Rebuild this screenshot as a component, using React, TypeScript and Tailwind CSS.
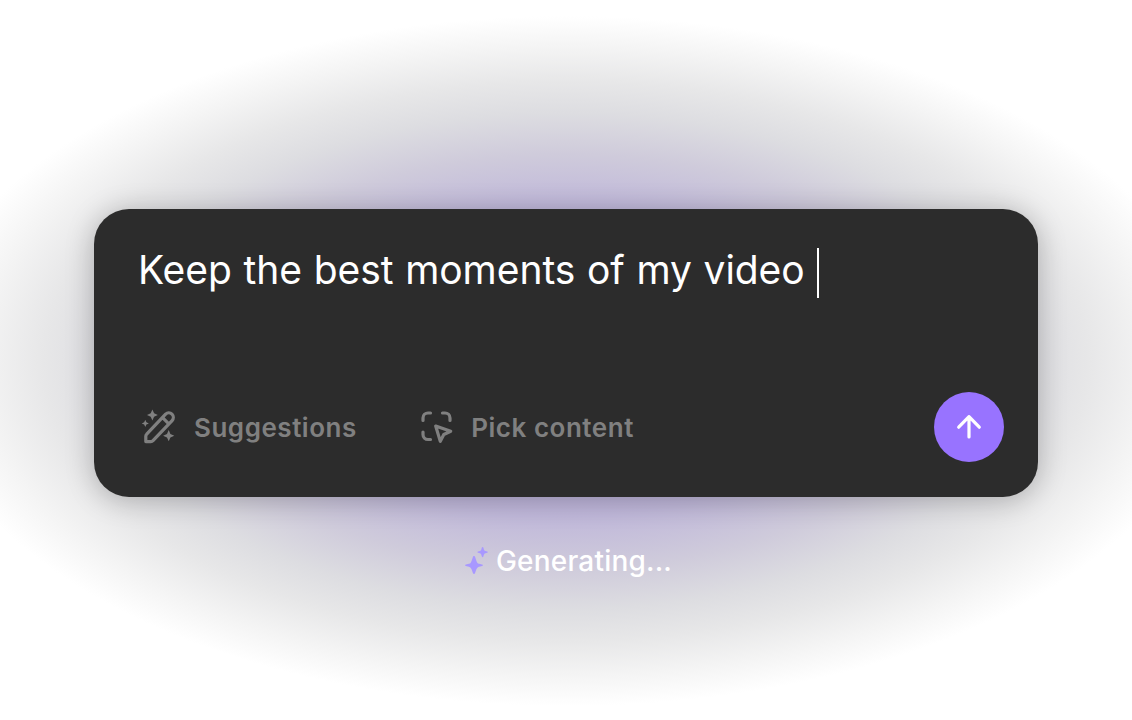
import React, { useState } from 'react';

type IconProps = { className?: string };

const SuggestionsIcon: React.FC<IconProps> = ({ className }) => (
  <svg className={className} viewBox="0 0 38 38" fill="none" aria-hidden="true">
    <path
      d="M5.8 33.6v-5.3c0-.8.3-1.6.9-2.1L25.6 6.1a4.6 4.6 0 0 1 6.5 6.5L13 32.7c-.6.6-1.3.9-2.1.9Z M22.6 9.6l6.2 6.2"
      stroke="currentColor"
      strokeWidth="3.2"
      strokeLinejoin="round"
    />
    <path
      d="M12.4 1.6l1.7 3.7 3.7 1.7-3.7 1.7-1.7 3.7-1.7-3.7-3.7-1.7 3.7-1.7ZM5.3 11.8l1.1 2.5 2.5 1.1-2.5 1.1-1.1 2.5-1.1-2.5-2.5-1.1 2.5-1.1ZM28.7 22.1l1.7 3.9 3.9 1.7-3.9 1.7-1.7 3.9-1.7-3.9-3.9-1.7 3.9-1.7Z"
      fill="currentColor"
    />
  </svg>
);

const PickIcon: React.FC<IconProps> = ({ className }) => (
  <svg className={className} viewBox="0 0 38 38" fill="none" aria-hidden="true">
    <g stroke="currentColor" strokeWidth="3.2" strokeLinecap="round" strokeLinejoin="round">
      <path d="M4 12.5V10a5 5 0 0 1 5-5h2.5M23.5 5h2.5a5 5 0 0 1 5 5v2.500M4 24v2.500a5 5 0 0 0 5 5h2.500" />
      <path d="M16.7 18l15 5.2-6.9 3.3-3.5 6.9Z" />
    </g>
  </svg>
);

const ArrowUpIcon: React.FC<IconProps> = ({ className }) => (
  <svg className={className} viewBox="0 0 30 30" fill="none" aria-hidden="true">
    <path
      d="M15 25V4.7M4.7 15.2L15 4.7l10.3 10.5"
      stroke="currentColor"
      strokeWidth="3.2"
      strokeLinecap="round"
      strokeLinejoin="round"
    />
  </svg>
);

const SparklesIcon: React.FC<IconProps> = ({ className }) => (
  <svg className={className} viewBox="0 0 24 28" fill="currentColor" aria-hidden="true">
    <path d="M9 9c.7 0 .9.5 1.1 1.1 1.2 3.6 1.6 5.1 2.3 5.8.7.6 1.9.8 4.6 1.5.6.2.9.4.9.8s-.3.7-.9.9c-2.7.7-3.9 1-4.6 1.6-.7.7-1.1 1.9-2.3 5.2-.2.6-.4.9-1.1.9s-.9-.3-1.1-.9c-1.2-3.3-1.6-4.5-2.3-5.2-.7-.6-1.9-.9-4.6-1.6-.6-.2-.9-.5-.9-.9s.3-.6.9-.8c2.7-.7 3.9-.9 4.6-1.5.7-.7 1.1-2.2 2.3-5.8C8.1 9.5 8.3 9 9 9Z" />
    <path d="M17.6 0c.4 0 .6.3.7.6.5 1.6.7 2.5 1.1 2.900.5.5 1.3.6 2.8 1 .4.1.6.3.6.6s-.2.5-.6.6c-1.5.4-2.3.5-2.8 1-.4.4-.6 1.300-1.100 2.900-.1.3-.3.6-.7.6s-.6-.3-.7-.6c-.5-1.600-.7-2.500-1.100-2.900-.5-.5-1.300-.6-2.800-1-.4-.1-.6-.3-.6-.6s.2-.5.6-.6c1.500-.4 2.300-.5 2.800-1 .4-.4.6-1.300 1.100-2.900.1-.3.3-.6.7-.6Z" />
  </svg>
);

const App: React.FC = () => {
  const [prompt] = useState('Keep the best moments of my video');

  return (
    <main className="flex h-[720px] w-full flex-col items-center overflow-hidden bg-white bg-[radial-gradient(645px_345px_at_566px_361px,#a995dc_0%,#c0b8da_45%,#cfcbdb_60%,#dddde1_72%,#e7e7e8_81%,#f4f4f4_91%,#ffffff_100%)] pt-[209px] font-['Inter',sans-serif]">
      <section className="flex h-72 w-[944px] flex-col justify-between rounded-[35px] bg-[#2c2c2c] pt-[39px] pr-[34.5px] pb-[35px] pl-11 shadow-[0_3px_28px_rgba(0,0,0,0.25)]">
        <div className="flex items-center">
          <p className="-mt-1.5 text-[39px] leading-[50px] tracking-[-0.05px] whitespace-nowrap text-white [word-spacing:0.8px]">
            {prompt}
          </p>
          <span className="ml-3 h-[50px] w-0.5 bg-white" />
        </div>

        <div className="flex items-center justify-between">
          <div className="flex items-center gap-[62px] text-[26px] font-semibold tracking-[0.02em] text-[#808080]">
            <button className="flex items-center gap-4 pl-0.5">
              <SuggestionsIcon className="size-[38px]" />
              Suggestions
            </button>
            <button className="flex items-center gap-[14.5px]">
              <PickIcon className="size-[38px]" />
              Pick content
            </button>
          </div>
          <button aria-label="Send" className="flex size-[70px] items-center justify-center rounded-full bg-[#9873ff] text-white">
            <ArrowUpIcon className="size-[30px]" />
          </button>
        </div>
      </section>

      <div className="mt-[46px] flex items-center gap-[7px] pl-[5px] text-white">
        <SparklesIcon className="h-7 w-6 text-[#a898ff]" />
        <span className="text-[28px] leading-9 font-medium tracking-[0.2px]">Generating...</span>
      </div>
    </main>
  );
};

export default App;
